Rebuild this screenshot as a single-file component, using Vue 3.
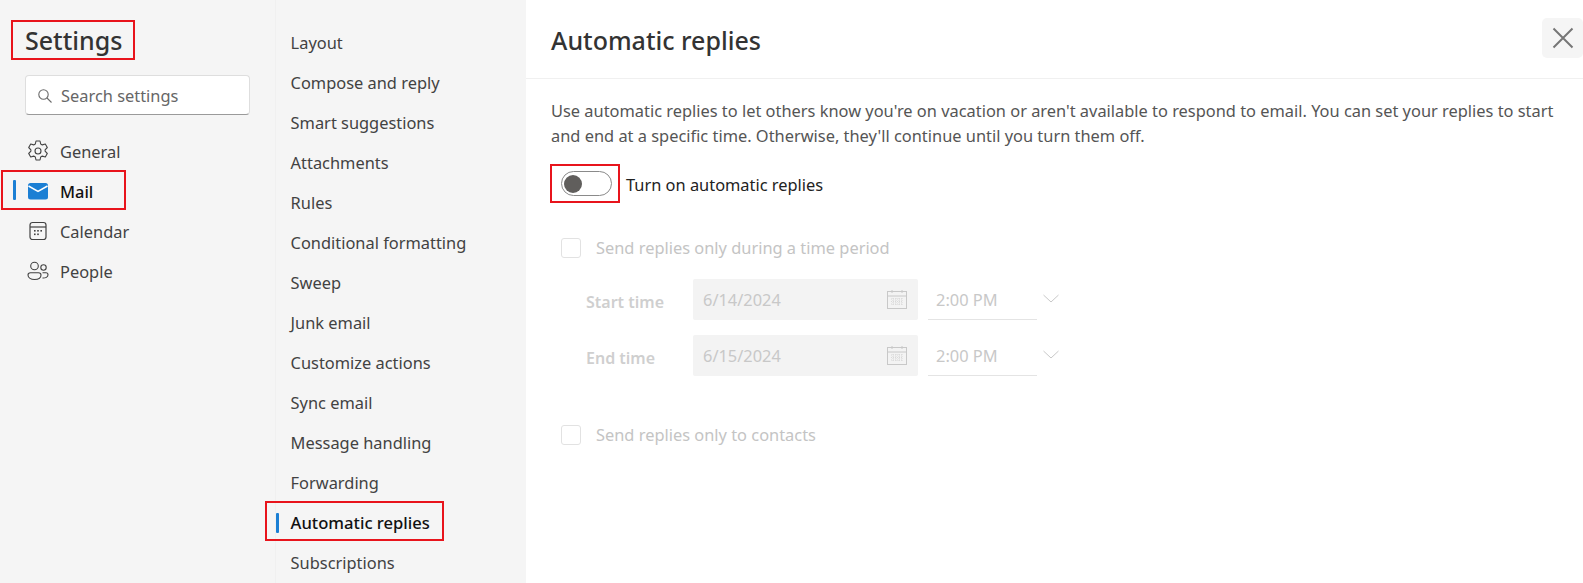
<script setup>
const mainNav = [
  { name: 'General', icon: 'gear' },
  { name: 'Mail', icon: 'mail', active: true },
  { name: 'Calendar', icon: 'calendar' },
  { name: 'People', icon: 'people' },
]
const subNav = ['Layout', 'Compose and reply', 'Smart suggestions', 'Attachments', 'Rules', 'Conditional formatting', 'Sweep', 'Junk email', 'Customize actions', 'Sync email', 'Message handling', 'Forwarding', 'Automatic replies', 'Subscriptions']
const times = [
  { label: 'Start time', date: '6/14/2024' },
  { label: 'End time', date: '6/15/2024' },
]
</script>

<template>
  <div class="page">
    <aside class="side">
      <h1 class="side-title">Settings<span class="mark mark-title"></span></h1>
      <div class="search">
        <svg width="16" height="16" viewBox="0 0 16 16" fill="none" stroke="#6b6b6b" stroke-width="1.1"><circle cx="6.5" cy="6.5" r="4.7"/><path d="M10 10l4.5 4.5"/></svg>
        <span>Search settings</span>
      </div>
      <nav class="main-nav">
        <div v-for="item in mainNav" :key="item.name" class="main-item" :class="{ active: item.active }">
          <i v-if="item.active" class="bar"></i>
          <svg v-if="item.icon === 'gear'" width="22" height="22" viewBox="0 0 22 22" fill="none" stroke="#424242" stroke-width="1.1" stroke-linejoin="round"><path d="M9 1h4l.7 3 1.600.9 3-.9 2 3.500-2.200 2.300v1.400l2.200 2.300-2 3.500-3-.9-1.600.9-.7 3H9l-.7-3-1.600-.9-3 .9-2-3.500 2.200-2.300V9.800L1.700 7.500l2-3.500 3 .9 1.600-.9z"/><circle cx="11" cy="11" r="3"/></svg>
          <svg v-else-if="item.icon === 'mail'" width="22" height="20" viewBox="0 0 22 20"><rect x="1" y="2" width="20" height="16.500" rx="2.500" fill="#1b7fd4"/><path d="M1.500 5l9.500 5.500L20.500 5" fill="none" stroke="#fff" stroke-width="1.500"/></svg>
          <svg v-else-if="item.icon === 'calendar'" width="22" height="22" viewBox="0 0 22 22" fill="none" stroke="#424242" stroke-width="1.200"><rect x="3" y="2.500" width="16" height="17" rx="2.500"/><path d="M3 7h16"/><g fill="#424242" stroke="none"><rect x="7" y="10" width="1.600" height="1.600"/><rect x="10.200" y="10" width="1.600" height="1.600"/><rect x="13.400" y="10" width="1.600" height="1.600"/><rect x="7" y="13.500" width="1.600" height="1.600"/><rect x="10.200" y="13.500" width="1.600" height="1.600"/></g></svg>
          <svg v-else width="22" height="22" viewBox="0 0 22 22" fill="none" stroke="#424242" stroke-width="1.100"><circle cx="7.500" cy="6" r="3.800"/><circle cx="16.500" cy="7.500" r="2.700"/><path d="M1 15c0-1.500 1-2.300 2.500-2.300h8c1.500 0 2.500.8 2.500 2.300 0 3-3 4.500-6.500 4.500S1 18 1 15z"/><path d="M15.500 12.700h3.500c1.300 0 2 .7 2 2 0 2.500-2.500 3.500-5.500 3.300"/></svg>
          <span>{{ item.name }}</span>
          <span v-if="item.active" class="mark mark-mail"></span>
        </div>
      </nav>
    </aside>

    <nav class="sub-nav">
      <div v-for="name in subNav" :key="name" class="sub-item" :class="{ active: name === 'Automatic replies' }">
        <template v-if="name === 'Automatic replies'"><i class="bar sub-bar"></i><span class="mark mark-sub"></span></template>
        {{ name }}
      </div>
    </nav>

    <main class="content">
      <header class="head">
        <h2>Automatic replies</h2>
        <button class="close" aria-label="Close">
          <svg width="22" height="22" viewBox="0 0 22 22" fill="none" stroke="#767676" stroke-width="2"><path d="M1.500 1.500l19 19M20.500 1.500l-19 19"/></svg>
        </button>
      </header>
      <div class="body">
        <p class="desc">Use automatic replies to let others know you're on vacation or aren't available to respond to email. You can set your replies to start<br>and end at a specific time. Otherwise, they'll continue until you turn them off.</p>
        <div class="toggle-row">
          <div class="toggle"><i></i><span class="mark mark-toggle"></span></div>
          <span class="toggle-label">Turn on automatic replies</span>
        </div>
        <label class="check first"><i></i><span>Send replies only during a time period</span></label>
        <div class="times">
          <div v-for="t in times" :key="t.label" class="time-row">
            <span class="time-label">{{ t.label }}</span>
            <div class="date">
              <span>{{ t.date }}</span>
              <svg width="22" height="22" viewBox="0 0 22 22" fill="none" stroke="#c8c8c8" stroke-width="1"><rect x="1.500" y="2.500" width="19" height="17"/><path d="M1.500 7h19M6 1v3M16 1v3"/><path d="M5 10h12M5 12.500h12M5 15h12M7 9v8M10 9v8M13 9v8M16 9v8" stroke-width=".6" stroke-dasharray="1 1"/></svg>
            </div>
            <div class="time"><span>2:00 PM</span></div>
            <svg class="chev" width="16" height="9" viewBox="0 0 16 9" fill="none" stroke="#c8c8c8" stroke-width="1"><path d="M.5 1L8 8l7.500-7"/></svg>
          </div>
        </div>
        <label class="check last"><i></i><span>Send replies only to contacts</span></label>
      </div>
    </main>
  </div>
</template>

<style>
html, body { margin: 0; background: #fff; overflow: hidden; }
</style>

<style scoped>
.page {
  display: flex;
  height: 583px;
  width: 1583px;
  overflow: hidden;
  font-family: "Noto Sans", "Open Sans", sans-serif;
  font-size: 16.4px;
  color: #424242;
  position: relative;
}
.side { width: 275px; flex: none; background: #f5f5f5; box-sizing: border-box; padding: 20px 0 0 25px; }
.side-title { margin: 0; font-size: 25px; font-weight: 500; line-height: 40px; color: #333; position: relative; width: max-content; }
.search {
  width: 225px; height: 40px; box-sizing: border-box; margin-top: 15px;
  background: #fff; border: 1px solid #dedede; border-bottom: 1px solid #9a9a9a; border-radius: 4px;
  display: flex; align-items: center; gap: 8px; padding: 1px 0 0 11px; color: #666;
}
.main-nav { margin-top: 16px; margin-left: -25px; }
.main-item { height: 40px; display: flex; align-items: center; gap: 11px; padding-left: 27px; position: relative; }
.main-item.active { color: #111; font-weight: 500; }
.bar { position: absolute; background: #1b7fd4; width: 3px; height: 20px; left: 13px; top: 9px; border-radius: 1px; }
.sub-nav { width: 251px; flex: none; background: #f5f5f5; border-left: 1px solid #f0f0f0; box-sizing: border-box; padding-top: 23.4px; }
.sub-item { height: 40px; line-height: 40px; padding-left: 14.6px; position: relative; white-space: nowrap; }
.sub-item.active { font-weight: 500; color: #111; font-size: 16.6px; }
.sub-bar { left: 0; top: 10px; height: 20px; width: 3px; }
.content { flex: 1; min-width: 0; }
.head { height: 79px; box-sizing: border-box; border-bottom: 1px solid #f0f0f0; display: flex; justify-content: space-between; padding: 18px 0 0 25px; }
.head h2 { margin: 0; font-size: 25px; font-weight: 500; line-height: 44px; color: #333; }
.close { width: 41px; height: 40px; border: 0; padding: 0; background: #f5f5f5; border-radius: 5px; display: flex; align-items: center; justify-content: center; }
.body { padding: 19px 0 0 25px; }
.desc { margin: 0; line-height: 25px; color: #555; white-space: nowrap; }
.toggle-row { display: flex; align-items: center; gap: 14px; margin: 23px 0 0 10px; color: #222; }
.toggle-label { padding-top: 2px; }
.toggle { width: 51px; height: 25px; box-sizing: border-box; border: 1px solid #8a8a8a; border-radius: 13px; position: relative; }
.toggle i { position: absolute; left: 2px; top: 2.500px; width: 18px; height: 18px; border-radius: 50%; background: #605e5c; }
.check { display: flex; align-items: center; gap: 15px; margin-left: 10px; color: #c4c4c4; line-height: 22px; }
.check i { width: 20px; height: 20px; box-sizing: border-box; border: 1px solid #e2e2e2; border-radius: 3px; }
.check.first { margin-top: 41px; }
.check.last { margin-top: 48px; }
.times { margin: 20px 0 0 35px; display: flex; flex-direction: column; gap: 15px; }
.time-row { display: flex; height: 41px; position: relative; }
.time-label { width: 107px; flex: none; font-size: 16px; font-weight: 600; color: #cfcfcf; line-height: 47px; }
.date { width: 225px; flex: none; background: #f3f3f3; border-radius: 2px; display: flex; align-items: center; justify-content: space-between; padding: 0 10px; box-sizing: border-box; color: #c8c8c8; }
.time { width: 109px; flex: none; margin-left: 10px; border-bottom: 1px solid #e4e4e4; box-sizing: border-box; padding-left: 8px; line-height: 42px; color: #c8c8c8; }
.chev { margin: 15px 0 0 6px; }
.mark { position: absolute; border: 2px solid #e8141c; box-sizing: border-box; pointer-events: none; }
.mark-title { left: -14px; top: 0; width: 124px; height: 40px; }
.mark-mail { left: 1px; top: -1px; width: 125px; height: 40px; }
.mark-sub { left: -11px; top: -2.400px; width: 179px; height: 40px; }
.mark-toggle { left: -12px; top: -8px; width: 70px; height: 39px; }
</style>
